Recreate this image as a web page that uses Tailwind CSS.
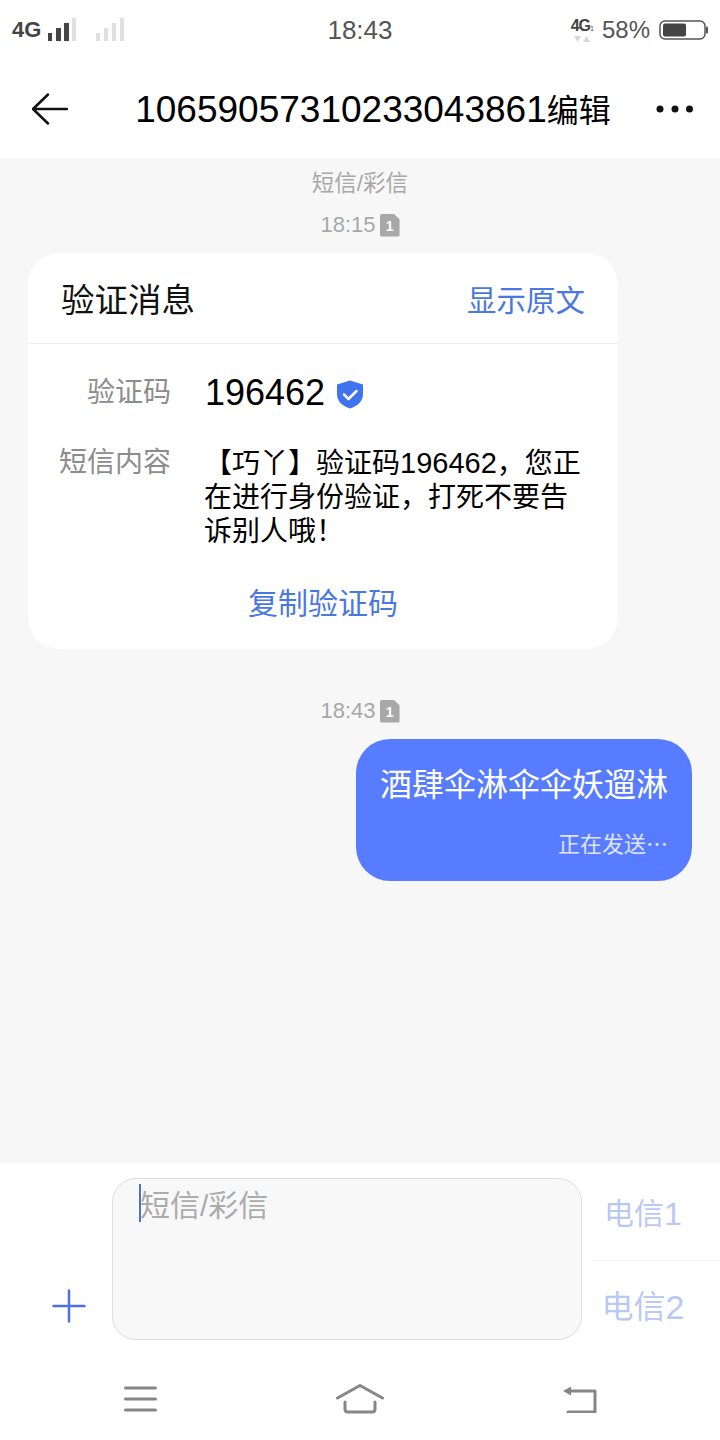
<!DOCTYPE html>
<html lang="zh-CN">
<head>
    <meta charset="UTF-8">
    <meta name="viewport" content="width=device-width, initial-scale=1.0">
    <title>短信</title>
    <script src="https://cdn.jsdelivr.net/npm/@tailwindcss/browser@4"></script>
</head>
<body class="bg-white">
    <div class="w-[720px] h-[1440px] flex flex-col overflow-hidden bg-white font-['Liberation_Sans','Noto_Sans_CJK_SC',sans-serif]">
        <!-- Status bar -->
        <div class="h-[60px] shrink-0 flex items-center justify-between pl-[12px] pr-[12px] text-[#555]">
            <div class="w-[200px] flex items-center">
                <span class="text-[22px] font-bold text-[#444] leading-none">4G</span>
                <svg class="ml-[7px]" width="28" height="24" viewBox="0 0 28 24"><rect x="0" y="15" width="4" height="8" fill="#444"/><rect x="8" y="10" width="5" height="13" fill="#444"/><rect x="16" y="5" width="5" height="18" fill="#444"/><rect x="24" y="0" width="4" height="23" fill="#e0e0e0"/></svg>
                <svg class="ml-[20px]" width="28" height="24" viewBox="0 0 28 24"><rect x="0" y="15" width="4" height="8" fill="#e0e0e0"/><rect x="8" y="10" width="4" height="13" fill="#e0e0e0"/><rect x="16" y="5" width="4" height="18" fill="#e0e0e0"/><rect x="24" y="0" width="4" height="23" fill="#e0e0e0"/></svg>
            </div>
            <span class="text-[26px] leading-none">18:43</span>
            <div class="w-[200px] flex items-center justify-end">
                <div class="flex flex-col items-center mr-[9px]">
                    <span class="text-[16px] font-bold text-[#444] leading-none tracking-[-1px]">4G<span class="text-[7px] font-normal">1</span></span>
                    <svg class="mt-[2px]" width="16" height="7" viewBox="0 0 16 7"><path d="M0 0h7L3.500 6z" fill="#d8d8d8"/><path d="M9 6h7L12.500 0z" fill="#d8d8d8"/></svg>
                </div>
                <span class="text-[24px] leading-none">58%</span>
                <svg class="ml-[9px]" width="49" height="22" viewBox="0 0 49 22"><rect x="1" y="2" width="45" height="18" rx="5" fill="none" stroke="#555" stroke-width="1.500"/><rect x="4" y="4.500" width="23" height="13" rx="2" fill="#444"/><rect x="47" y="7.500" width="2" height="7" rx="1" fill="#555"/></svg>
            </div>
        </div>

        <!-- Header -->
        <div class="h-[98px] shrink-0 flex items-center pl-[32px] pr-[26px] text-black">
            <svg width="36" height="32" viewBox="0 0 36 32" fill="none" stroke="#111" stroke-width="2.500" stroke-linecap="round" stroke-linejoin="round"><path d="M1 16h34M16 1.500 1 16l15 14.500"/></svg>
            <div class="flex-1 pl-[22px] text-center text-[37px] leading-none whitespace-nowrap">10659057310233043861<span class="text-[32px]">编辑</span></div>
            <svg width="38" height="10" viewBox="0 0 38 10" fill="#111"><circle cx="4" cy="5" r="3.500"/><circle cx="19" cy="5" r="3.500"/><circle cx="33.500" cy="5" r="3.500"/></svg>
        </div>

        <!-- Messages -->
        <div class="flex-1 bg-[#f7f7f7] flex flex-col">
            <div class="mt-[13px] text-center text-[22.500px] leading-[26px] text-[#a8a8a8]">短信/彩信</div>
            <div class="mt-[15px] h-[26px] flex items-center justify-center gap-[4px] text-[22px] text-[#a8a8a8] leading-none">
                <span>18:15</span>
                <span class="w-[20px] h-[23px] bg-[#a8a8a8] rounded-[2px] [clip-path:polygon(0_0,70%_0,100%_25%,100%_100%,0_100%)] text-white text-[14px] font-bold flex items-center justify-center pt-[2px]">1</span>
            </div>

            <!-- Verification card -->
            <div class="ml-[28px] mt-[15px] w-[590px] h-[396px] bg-white rounded-[32px]">
                <div class="h-[91px] border-b border-[#f0f0f0] flex items-center justify-between px-[33px] pt-[5px]">
                    <span class="text-[33.500px] leading-none text-[#111]">验证消息</span>
                    <span class="text-[29.500px] leading-none text-[#4a78e0]">显示原文</span>
                </div>
                <div class="mt-[24px] flex items-center h-[50px]">
                    <span class="w-[143px] text-right text-[28px] leading-none text-[#8c8c8c]">验证码</span>
                    <span class="ml-[34px] text-[36px] leading-none text-black">196462</span>
                    <svg class="ml-[11px] mt-[3px]" width="28" height="29" viewBox="0 0 28 29"><path d="M14 0.500 27 4.500V14c0 7.500-5.500 12-13 14.500C6.500 26 1 21.500 1 14V4.500z" fill="#3f73f0"/><path d="M8 14.500l4.500 4.500 8-8" fill="none" stroke="#fff" stroke-width="2.500" stroke-linecap="round" stroke-linejoin="round"/></svg>
                </div>
                <div class="mt-[28px] flex">
                    <span class="w-[143px] text-right text-[28px] leading-[34px] text-[#8c8c8c]">短信内容</span>
                    <p class="ml-[33px] text-[28px] leading-[34px] text-black whitespace-nowrap">【巧丫】验证码<span class="text-[29px]">196462</span>，您正<br>在进行身份验证，打死不要告<br>诉别人哦！</p>
                </div>
                <div class="mt-[35px] text-center text-[30px] leading-[40px] text-[#4a78e0]">复制验证码</div>
            </div>

            <div class="mt-[49px] h-[26px] flex items-center justify-center gap-[4px] text-[22px] text-[#a8a8a8] leading-none">
                <span>18:43</span>
                <span class="w-[20px] h-[23px] bg-[#a8a8a8] rounded-[2px] [clip-path:polygon(0_0,70%_0,100%_25%,100%_100%,0_100%)] text-white text-[14px] font-bold flex items-center justify-center pt-[2px]">1</span>
            </div>

            <!-- Outgoing bubble -->
            <div class="self-end mr-[28px] mt-[15px] w-[336px] h-[142px] bg-[#587cff] rounded-[34px] px-[24px] text-right text-white">
                <div class="pt-[25px] text-[32px] leading-[42px] text-center whitespace-nowrap">酒肆伞淋伞伞妖遛淋</div>
                <div class="mt-[22px] text-[22px] leading-[28px] text-white/80 font-['Noto_Sans_CJK_SC',sans-serif]">正在发送⋯</div>
            </div>
        </div>

        <!-- Composer -->
        <div class="h-[277px] shrink-0 bg-white flex flex-col">
            <div class="h-[177px] flex items-start pt-[15px]">
                <div class="w-[112px] h-[162px] flex items-end justify-center pb-[17px]">
                    <svg class="ml-[25px]" width="34" height="34" viewBox="0 0 34 34" stroke="#4a72e0" stroke-width="2.500" stroke-linecap="round"><path d="M17 1.500v31M1.500 17h31"/></svg>
                </div>
                <div class="w-[470px] h-[162px] bg-[#f8f8f8] border border-[#dedede] rounded-[24px] pl-[26px] pt-[5px] flex items-start">
                    <span class="w-[2px] h-[38px] bg-[#4a72c8] shrink-0"></span>
                    <span class="-ml-[1px] mt-[2px] text-[30px] leading-[40px] text-[#ababab]">短信/彩信</span>
                </div>
                <div class="flex-1 h-[162px] ml-[8px] flex flex-col leading-none text-[#b9c9f5]">
                    <div class="h-[83px] border-b border-[#f5f5f5] flex items-center justify-center pr-[24px] pb-[10px] text-[30px]">电信<span class="text-[32px]">1</span></div>
                    <div class="h-[79px] flex items-center justify-center pr-[24px] pt-[12px] text-[32px]">电信<span class="text-[34px]">2</span></div>
                </div>
            </div>

            <!-- Navigation keys -->
            <div class="flex-1 flex items-start justify-between pl-[124px] pr-[123px] pt-[44px]">
                <svg class="mt-[2px]" width="33" height="26" viewBox="0 0 33 26" stroke="#868686" stroke-width="3" stroke-linecap="round"><path d="M1.500 2h30M1.500 13h30M1.500 24h30"/></svg>
                <svg width="48" height="30" viewBox="0 0 48 30" fill="none" stroke="#868686" stroke-width="3" stroke-linecap="round" stroke-linejoin="round"><path d="M1.500 14 24 1.500 46.500 14M9 18v7c0 2 1 3 3 3h24c2 0 3-1 3-3v-7"/></svg>
                <svg class="mt-[1px]" width="35" height="28" viewBox="0 0 35 28" fill="none" stroke="#868686" stroke-width="3" stroke-linecap="round" stroke-linejoin="round"><path d="M9 6h24v21H6"/><path d="M1 6 9 1.500v9z" fill="#868686" stroke="none"/></svg>
            </div>
        </div>
    </div>
</body>
</html>
